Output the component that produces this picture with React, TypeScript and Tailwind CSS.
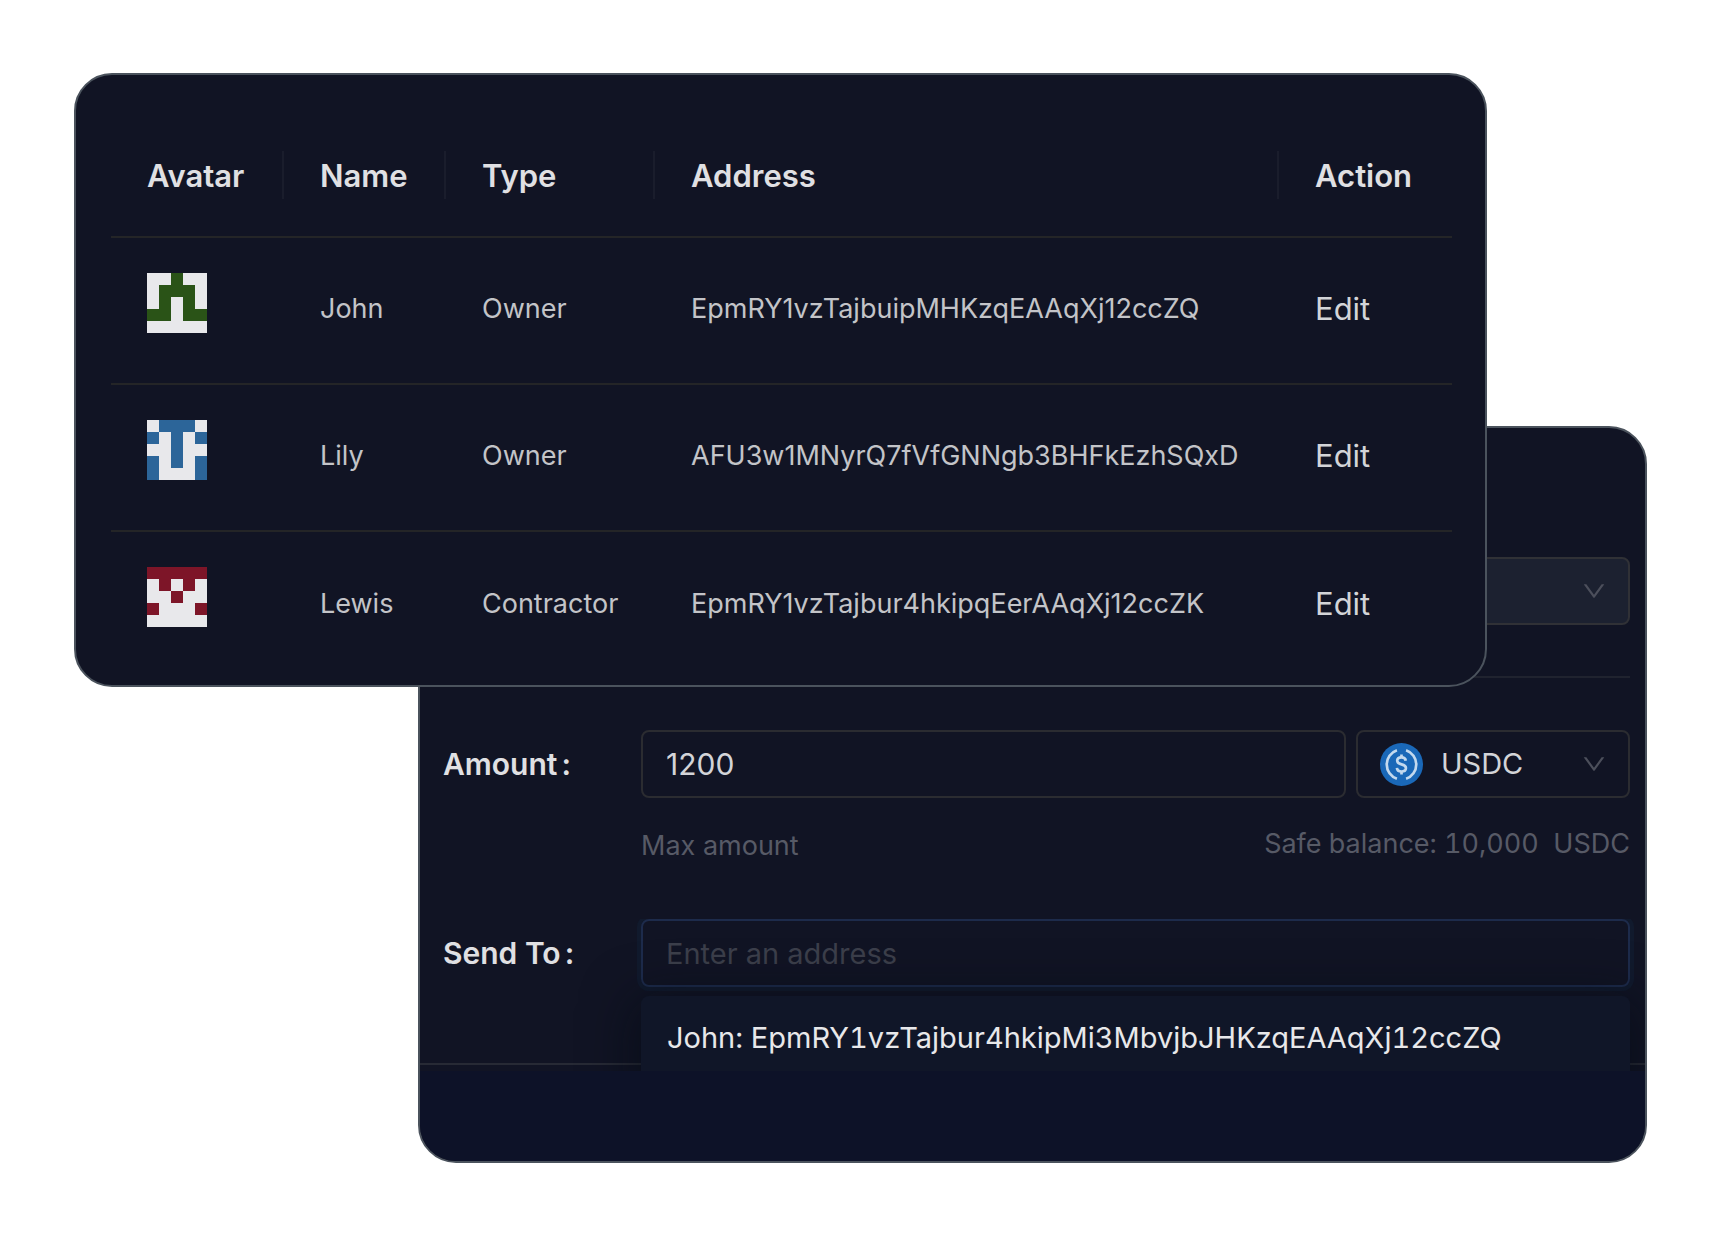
type Contact = {
  name: string;
  type: string;
  address: string;
  color: string;
  pixels: string[];
};

const contacts: Contact[] = [
  {
    name: "John",
    type: "Owner",
    address: "EpmRY1vzTajbuipMHKzqEAAqXj12ccZQ",
    color: "#2a5317",
    pixels: ["..#..", ".###.", ".#.#.", "##.##", "....."],
  },
  {
    name: "Lily",
    type: "Owner",
    address: "AFU3w1MNyrQ7fVfGNNgb3BHFkEzhSQxD",
    color: "#2c6599",
    pixels: [".###.", "#.#.#", "..#..", "#.#.#", "#...#"],
  },
  {
    name: "Lewis",
    type: "Contractor",
    address: "EpmRY1vzTajbur4hkipqEerAAqXj12ccZK",
    color: "#7d1528",
    pixels: ["#####", ".#.#.", "..#..", "#...#", "....."],
  },
];

function Identicon({ color, pixels }: { color: string; pixels: string[] }) {
  return (
    <svg aria-hidden={true} viewBox="0 0 5 5" shapeRendering="crispEdges" className="size-[60px] bg-[#e8e8eb]">
      {pixels.flatMap((row, y) =>
        row.split("").map((cell, x) =>
          cell === "#" ? <rect key={`${x}-${y}`} x={x} y={y} width="1" height="1" fill={color} /> : null
        )
      )}
    </svg>
  );
}

function DownIcon() {
  return (
    <svg
      aria-hidden={true}
      viewBox="64 64 896 896"
      fill="currentColor"
      className="pointer-events-none absolute inset-y-0 right-6 my-auto size-6 text-[#4c4f5b]"
    >
      <path d="M884 256h-75c-5.1 0-9.9 2.5-12.9 6.6L512 654.2 227.9 262.6c-3-4.1-7.8-6.6-12.9-6.6h-75c-6.5 0-10.3 7.4-6.5 12.7l352.6 486.1c12.8 17.6 39 17.6 51.7 0l352.6-486.1c3.9-5.3.1-12.7-6.4-12.7z" />
    </svg>
  );
}

function UsdcIcon() {
  return (
    <svg
      aria-hidden={true}
      viewBox="0 0 32 32"
      fill="none"
      className="pointer-events-none absolute inset-y-0 left-6 my-auto size-[43px]"
    >
      <circle cx="16" cy="16" r="16" fill="#1a68b8" />
      <g stroke="#c3d9ee" strokeWidth="2">
        <path d="M12.6 5.4a11.2 11.2 0 0 0 0 21.2" />
        <path d="M19.4 5.4a11.2 11.2 0 0 1 0 21.2" />
        <path d="M19.2 13.2c-.2-1.6-1.4-2.5-3.2-2.5-1.9 0-3.2 1-3.2 2.5 0 3.6 6.5 1.8 6.5 5.4 0 1.6-1.3 2.6-3.3 2.6-2 0-3.3-1-3.4-2.7" />
        <path d="M16 8.6v2.4M16 21v2.4" />
      </g>
    </svg>
  );
}

function ContactsTable() {
  const head = "relative px-9 pt-0.5 text-left font-semibold";
  const cell = "px-9 pb-0.5";
  const divider = <span aria-hidden={true} className="absolute top-[37px] right-0 h-12 w-0.5 bg-[#1a1d2c]" />;
  return (
    <table className="w-full table-fixed border-collapse text-[27px] text-[#c3c4c8]">
      <colgroup>
        <col className="w-[173px]" />
        <col className="w-[162px]" />
        <col className="w-[209px]" />
        <col />
        <col className="w-[173px]" />
      </colgroup>
      <thead>
        <tr className="h-[123px] border-b-2 border-[#242527] text-[31px] text-[#e0e0e3]">
          <th className={head}>Avatar{divider}</th>
          <th className={head}>Name{divider}</th>
          <th className={head}>Type{divider}</th>
          <th className={head}>Address{divider}</th>
          <th className={head}>Action</th>
        </tr>
      </thead>
      <tbody>
        {contacts.map((contact) => (
          <tr key={contact.name} className="h-[147px] border-b-2 border-[#242527] last:border-0">
            <td className="px-9 pt-[35px] align-top">
              <Identicon color={contact.color} pixels={contact.pixels} />
            </td>
            <td className={cell}>{contact.name}</td>
            <td className={cell}>{contact.type}</td>
            <td className={cell}>{contact.address}</td>
            <td className={cell}>
              <button type="button" className="text-[31px] text-[#d3d4d8]">Edit</button>
            </td>
          </tr>
        ))}
      </tbody>
    </table>
  );
}

function TransferForm() {
  const label = "flex h-[68px] items-center gap-1 text-[30px] font-semibold text-[#e0e0e3]";
  return (
    <form className="flex flex-col">
      <div className="pr-[15px] pl-[23px]">
        <div className="relative ml-[198px]">
          <select aria-label="Safe" className="h-[68px] w-full appearance-none rounded-lg border-2 border-[#303136] bg-[#1c2130] px-6">
            <option></option>
          </select>
          <DownIcon />
        </div>
        <hr className="mt-[51px] border-t-2 border-[#20232f]" />
        <div className="mt-[52px] flex">
          <label htmlFor="amount" className={`${label} w-[198px]`}>
            Amount<span>:</span>
          </label>
          <div className="flex-1">
            <div className="flex gap-[10px]">
              <input
                id="amount"
                defaultValue="1200"
                className="h-[68px] min-w-0 flex-1 rounded-lg border-2 border-[#2b2c31] bg-transparent px-[23px] text-[30px] text-[#d3d4d8] outline-none"
              />
              <div className="relative w-[274px]">
                <select
                  aria-label="Token"
                  className="h-[68px] w-full appearance-none rounded-lg border-2 border-[#2b2c31] bg-transparent pl-[83px] text-[29px] text-[#d3d4d8]"
                >
                  <option>USDC</option>
                </select>
                <UsdcIcon />
                <DownIcon />
              </div>
            </div>
            <div className="mt-6 flex h-12 items-start justify-between text-[27px] text-[#575a66]">
              <button type="button" className="leading-[48px]">Max amount</button>
              <span className="leading-[44px] whitespace-pre tabular-nums">Safe balance: 10,000  USDC</span>
            </div>
          </div>
        </div>
      </div>
      <div className="relative mt-[49px] h-[152px] overflow-hidden">
        <div className="h-[146px] border-b-2 border-[#272a35] pr-[15px] pl-[23px]">
          <div className="flex">
            <label htmlFor="recipient" className={`${label} w-[198px]`}>
              Send To<span>:</span>
            </label>
            <input
              id="recipient"
              placeholder="Enter an address"
              className="h-[68px] min-w-0 flex-1 rounded-lg border-2 border-[#1d2b4b] bg-transparent px-[23px] text-[29px] text-[#d3d4d8] shadow-[0_0_0_4px_#111a2d] outline-none placeholder:text-[#3c3f4b]"
            />
          </div>
        </div>
        <ul className="absolute top-[77px] right-[15px] left-[221px] rounded-lg bg-[#101628] shadow-[0_10px_50px_8px_rgba(5,10,20,0.6)]">
          <li className="h-24 px-[26px] pt-[17px] text-[29px] leading-[50px] text-[#e8e8ea] tabular-nums">
            John: EpmRY1vzTajbur4hkipMi3MbvjbJHKzqEAAqXj12ccZQ
          </li>
        </ul>
      </div>
      <div className="h-[90px] bg-[#0d1228]" />
    </form>
  );
}

export default function App() {
  return (
    <main className="min-h-screen bg-white py-[73px] font-['Inter',sans-serif]">
      <section className="relative z-10 mr-[234px] ml-[74px] rounded-[38px] border-2 border-[#4b535d] bg-[#111424] pt-[39px] pr-[33px] pb-[7px] pl-[35px]">
        <ContactsTable />
      </section>
      <section className="-mt-[261px] mr-[74px] ml-[418px] overflow-hidden rounded-[38px] border-2 border-[#4b535d] bg-[#111424] pt-[129px]">
        <TransferForm />
      </section>
    </main>
  );
}
